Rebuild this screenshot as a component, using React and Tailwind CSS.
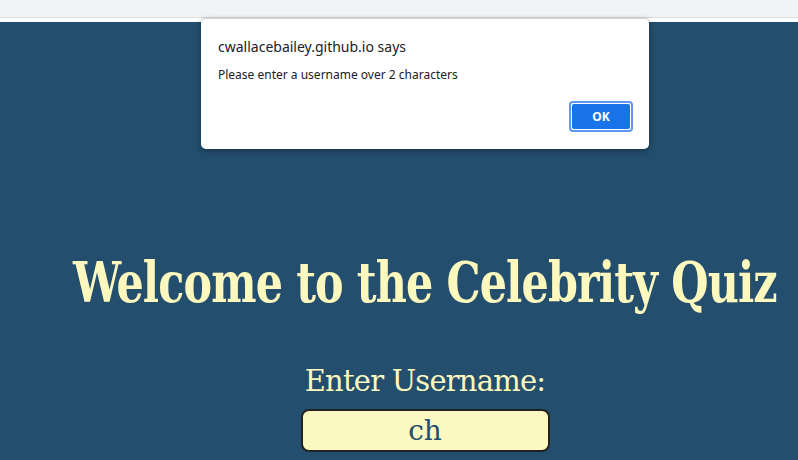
export default function App() {
  return (
    <div className="relative w-[798px] h-[460px] overflow-hidden bg-[#234e6e]">
      <div className="h-[18px] bg-[#f1f3f4] border-b border-[#dadce0]" />
      <div className="h-[4px] bg-white" />
      <div className="w-[850px] flex flex-col items-center text-[#fdf9be]">
        <h1 className="mt-[228px] text-[56px] leading-[64px] font-bold font-['DejaVu_Serif_Condensed','DejaVu_Serif',serif] font-stretch-condensed tracking-[-1px] whitespace-nowrap scale-x-[0.85] origin-center">
          Welcome to the Celebrity Quiz
        </h1>
        <div className="mt-[50px] text-[29px] leading-[34px] font-['DejaVu_Serif',serif] tracking-[-0.8px]">
          Enter Username:
        </div>
        <div className="mt-[11px] w-[249px] h-[43px] rounded-[8px] border-2 border-[#222] bg-[#fbf8c1] flex items-center justify-center text-[28px] text-[#234e6e] font-['DejaVu_Serif',serif]">
          ch
        </div>
      </div>
      <div className="absolute left-[201px] top-[18px] w-[448px] h-[131px] bg-white rounded-[5px] border-t border-[#d0d0d0] shadow-[0_2px_6px_rgba(0,0,0,0.35)] font-['Noto_Sans',sans-serif] text-[#202124] flex flex-col px-[17px] pt-[18px]">
        <div className="text-[14px] leading-[20px]">cwallacebailey.github.io says</div>
        <div className="mt-[9px] text-[12px] leading-[17px]">Please enter a username over 2 characters</div>
        <div className="mt-[18px] self-end mr-[-1px] w-[64px] h-[31px] rounded-[4px] border-2 border-[#5e97f6] p-[1px] bg-white">
          <div className="w-full h-full rounded-[2px] bg-[#1a73e8] flex items-center justify-center text-white text-[12px] font-bold">OK</div>
        </div>
      </div>
    </div>
  );
}
